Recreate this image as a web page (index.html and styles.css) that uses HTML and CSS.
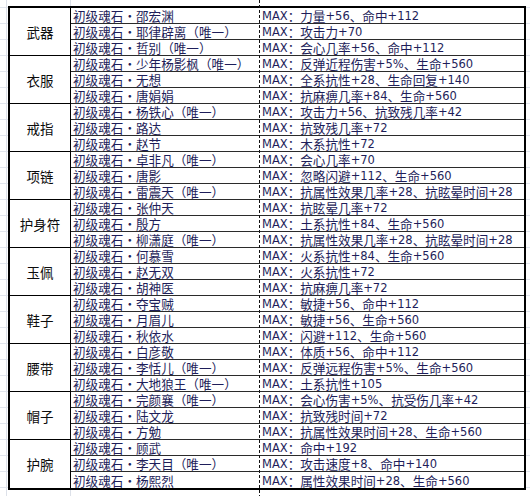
FILE: index.html
```html
<!DOCTYPE html>
<html lang="zh-CN">
<head>
<meta charset="utf-8">
<title>初级魂石</title>
<link rel="stylesheet" href="styles.css">
</head>
<body>
<div class="sheet">
  <div class="cat">武器</div>
  <div class="name">初级魂石・邵宏渊</div><div class="stat"><span class="l">MAX</span>：力量<span class="l">+56</span>、命中<span class="l">+112</span></div>
  <div class="name">初级魂石・耶律辟离（唯一）</div><div class="stat"><span class="l">MAX</span>：攻击力<span class="l">+70</span></div>
  <div class="name">初级魂石·哲别（唯一）</div><div class="stat"><span class="l">MAX</span>：会心几率<span class="l">+56</span>、命中<span class="l">+112</span></div>

  <div class="cat">衣服</div>
  <div class="name">初级魂石・少年杨影枫（唯一）</div><div class="stat"><span class="l">MAX</span>：反弹近程伤害<span class="l">+5%</span>、生命<span class="l">+560</span></div>
  <div class="name">初级魂石・无想</div><div class="stat"><span class="l">MAX</span>：全系抗性<span class="l">+28</span>、生命回复<span class="l">+140</span></div>
  <div class="name">初级魂石·唐娟娟</div><div class="stat"><span class="l">MAX</span>：抗麻痹几率<span class="l">+84</span>、生命<span class="l">+560</span></div>

  <div class="cat">戒指</div>
  <div class="name">初级魂石・杨铁心（唯一）</div><div class="stat"><span class="l">MAX</span>：攻击力<span class="l">+56</span>、抗致残几率<span class="l">+42</span></div>
  <div class="name">初级魂石・路达</div><div class="stat"><span class="l">MAX</span>：抗致残几率<span class="l">+72</span></div>
  <div class="name">初级魂石・赵节</div><div class="stat"><span class="l">MAX</span>：木系抗性<span class="l">+72</span></div>

  <div class="cat">项链</div>
  <div class="name">初级魂石・卓非凡（唯一）</div><div class="stat"><span class="l">MAX</span>：会心几率<span class="l">+70</span></div>
  <div class="name">初级魂石・唐影</div><div class="stat"><span class="l">MAX</span>：忽略闪避<span class="l">+112</span>、生命<span class="l">+560</span></div>
  <div class="name">初级魂石・雷震天（唯一）</div><div class="stat"><span class="l">MAX</span>：抗属性效果几率<span class="l">+28</span>、抗眩晕时间<span class="l">+28</span></div>

  <div class="cat">护身符</div>
  <div class="name">初级魂石・张仲天</div><div class="stat"><span class="l">MAX</span>：抗眩晕几率<span class="l">+72</span></div>
  <div class="name">初级魂石・殷方</div><div class="stat"><span class="l">MAX</span>：土系抗性<span class="l">+84</span>、生命<span class="l">+560</span></div>
  <div class="name">初级魂石・柳潇庭（唯一）</div><div class="stat"><span class="l">MAX</span>：抗属性效果几率<span class="l">+28</span>、抗眩晕时间<span class="l">+28</span></div>

  <div class="cat">玉佩</div>
  <div class="name">初级魂石・何慕雪</div><div class="stat"><span class="l">MAX</span>：火系抗性<span class="l">+84</span>、生命<span class="l">+560</span></div>
  <div class="name">初级魂石・赵无双</div><div class="stat"><span class="l">MAX</span>：火系抗性<span class="l">+72</span></div>
  <div class="name">初级魂石・胡神医</div><div class="stat"><span class="l">MAX</span>：抗麻痹几率<span class="l">+72</span></div>

  <div class="cat">鞋子</div>
  <div class="name">初级魂石・夺宝贼</div><div class="stat"><span class="l">MAX</span>：敏捷<span class="l">+56</span>、命中<span class="l">+112</span></div>
  <div class="name">初级魂石・月眉儿</div><div class="stat"><span class="l">MAX</span>：敏捷<span class="l">+56</span>、生命<span class="l">+560</span></div>
  <div class="name">初级魂石・秋依水</div><div class="stat"><span class="l">MAX</span>：闪避<span class="l">+112</span>、生命<span class="l">+560</span></div>

  <div class="cat">腰带</div>
  <div class="name">初级魂石・白彦敬</div><div class="stat"><span class="l">MAX</span>：体质<span class="l">+56</span>、命中<span class="l">+112</span></div>
  <div class="name">初级魂石・李恬儿（唯一）</div><div class="stat"><span class="l">MAX</span>：反弹远程伤害<span class="l">+5%</span>、生命<span class="l">+560</span></div>
  <div class="name">初级魂石・大地狼王（唯一）</div><div class="stat"><span class="l">MAX</span>：土系抗性<span class="l">+105</span></div>

  <div class="cat">帽子</div>
  <div class="name">初级魂石・完颜襄（唯一）</div><div class="stat"><span class="l">MAX</span>：会心伤害<span class="l">+5%</span>、抗受伤几率<span class="l">+42</span></div>
  <div class="name">初级魂石・陆文龙</div><div class="stat"><span class="l">MAX</span>：抗致残时间<span class="l">+72</span></div>
  <div class="name">初级魂石・方勉</div><div class="stat"><span class="l">MAX</span>：抗属性效果时间<span class="l">+28</span>、生命<span class="l">+560</span></div>

  <div class="cat end">护腕</div>
  <div class="name">初级魂石・顾武</div><div class="stat"><span class="l">MAX</span>：命中<span class="l">+192</span></div>
  <div class="name">初级魂石・李天目（唯一）</div><div class="stat"><span class="l">MAX</span>：攻击速度<span class="l">+8</span>、命中<span class="l">+140</span></div>
  <div class="name end">初级魂石・杨熙烈</div><div class="stat end"><span class="l">MAX</span>：属性效果时间<span class="l">+28</span>、生命<span class="l">+560</span></div>
</div>
<div class="pagebreak"></div>
</body>
</html>
```

FILE: styles.css
```css
html, body {
  margin: 0;
  height: 100%;
}

body {
  position: relative;
  overflow: hidden;
  font-family: "Noto Sans CJK SC", "Noto Sans", sans-serif;
  background:
    linear-gradient(#dde1e9, #dde1e9) 6px 0 / 1px 100% no-repeat,
    linear-gradient(#dde1e9, #dde1e9) 70px 0 / 1px 100% no-repeat,
    repeating-linear-gradient(to bottom, transparent 0 7px, #e1e5ed 7px 8px, transparent 8px 16px) #fff;
}

.sheet {
  display: grid;
  grid-template-columns: 61px 188px 1fr;
  grid-auto-rows: 16px;
  width: 518px;
  box-sizing: border-box;
  margin: 6px 0 0 8px;
  border: 2px solid #000;
  background: #fff;
}

.cat {
  grid-column: 1;
  grid-row: span 3;
  display: flex;
  align-items: center;
  justify-content: center;
  border-right: 1px solid #000;
  border-bottom: 1px solid #000;
  font-size: 13.5px;
  color: #0c0c0c;
}

.name,
.stat {
  display: flex;
  align-items: flex-end;
  border-bottom: 1px solid #2b2b2b;
  font-size: 12.6px;
  line-height: 14px;
  color: #1e1e5a;
  white-space: nowrap;
  overflow: visible;
}

.name {
  grid-column: 2;
  padding-left: 2px;
}

.stat {
  grid-column: 3;
  padding-left: 3px;
}

.l {
  font-family: "DejaVu Sans", sans-serif;
  font-size: 11.5px;
}

.end {
  border-bottom: none;
}

.pagebreak {
  position: absolute;
  left: 259px;
  top: 0;
  bottom: 0;
  width: 1px;
  background: repeating-linear-gradient(to bottom, #111 0 3px, transparent 3px 5px);
}
```
